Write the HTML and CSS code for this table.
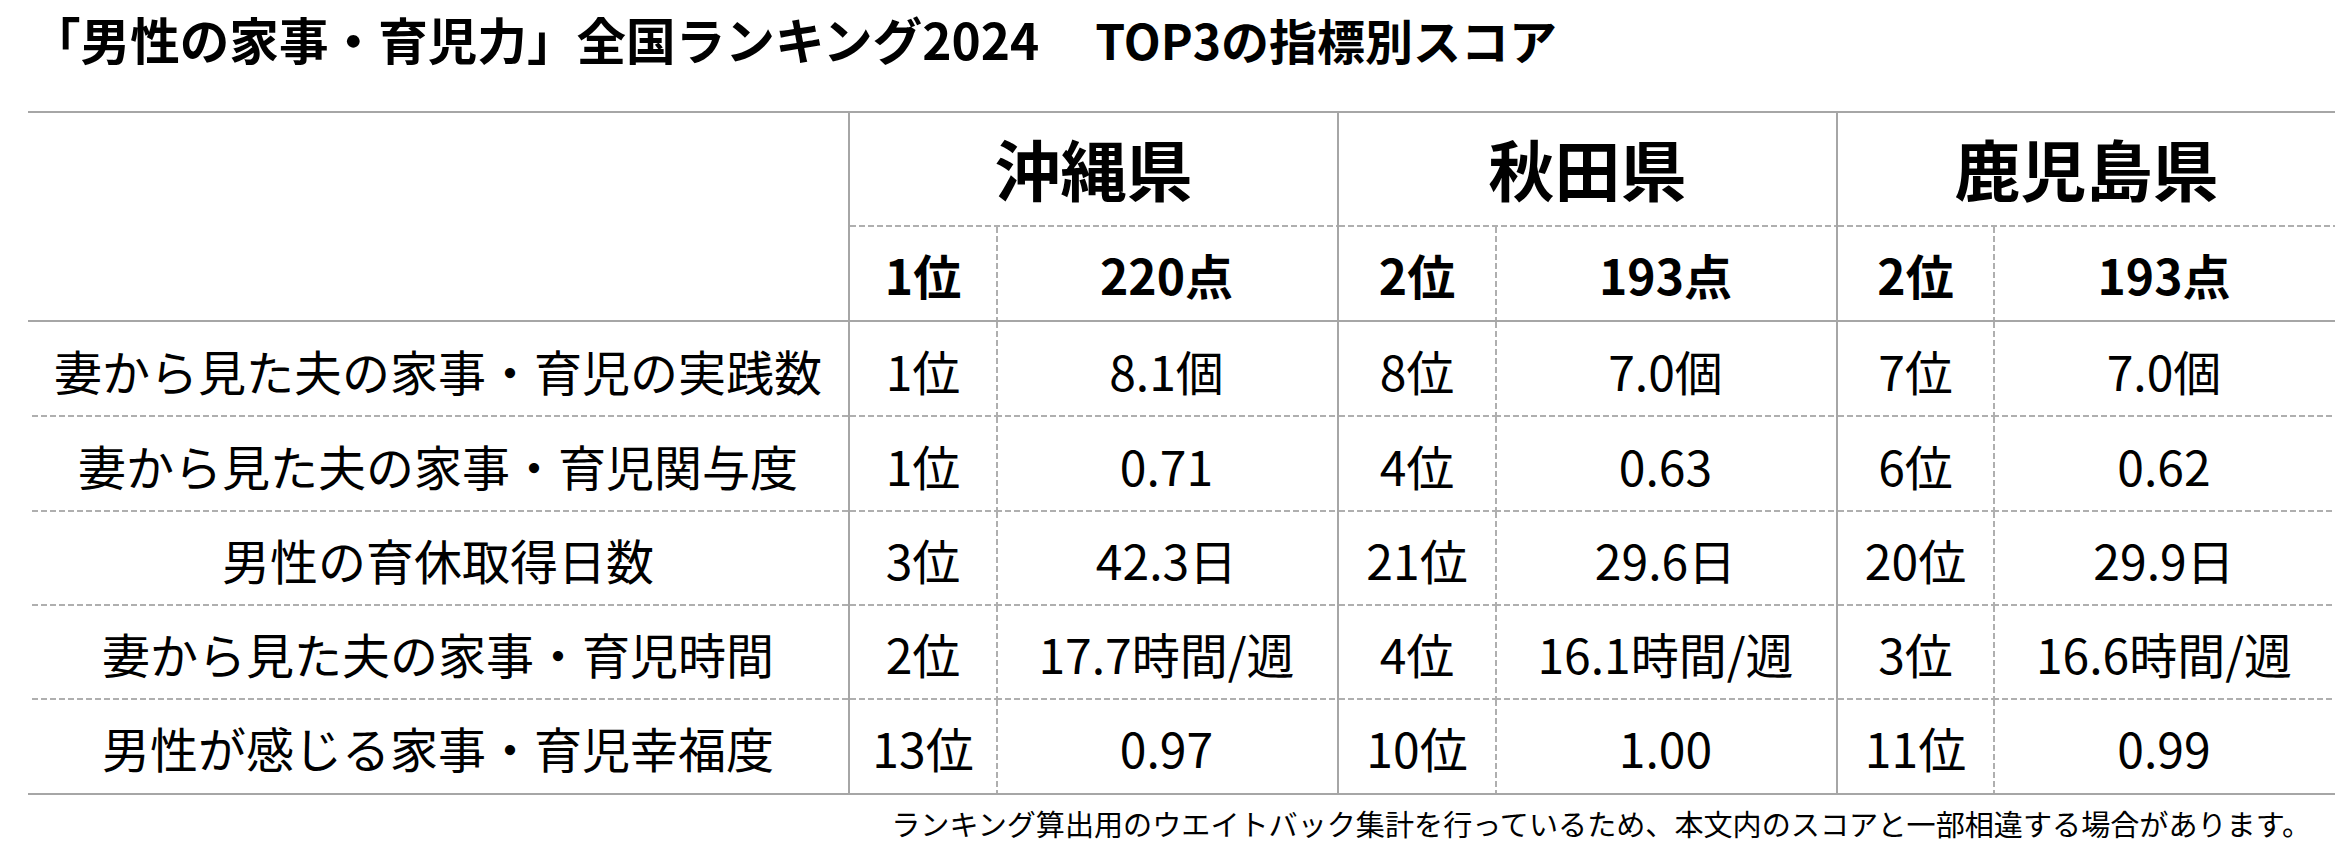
FILE: index.html
```html
<!DOCTYPE html>
<html lang="ja">
<head>
<meta charset="utf-8">
<title>「男性の家事・育児力」全国ランキング2024 TOP3の指標別スコア</title>
<link rel="stylesheet" href="styles.css">
</head>
<body>
<main class="page">
  <h1 class="title"><span class="title-main">「男性の家事・育児力」全国ランキング2024</span><span class="title-sub">TOP3の指標別スコア</span></h1>

  <div class="score-table" role="table">
    <div class="cell head-blank" role="columnheader"></div>
    <div class="cell pref" role="columnheader">沖縄県</div>
    <div class="cell pref" role="columnheader">秋田県</div>
    <div class="cell pref" role="columnheader">鹿児島県</div>

    <div class="cell rank total">1位</div>
    <div class="cell score total">220点</div>
    <div class="cell rank total">2位</div>
    <div class="cell score total">193点</div>
    <div class="cell rank total">2位</div>
    <div class="cell score total">193点</div>

    <div class="cell label">妻から見た夫の家事・育児の実践数</div>
    <div class="cell rank">1位</div>
    <div class="cell score">8.1個</div>
    <div class="cell rank">8位</div>
    <div class="cell score">7.0個</div>
    <div class="cell rank">7位</div>
    <div class="cell score">7.0個</div>

    <div class="cell label">妻から見た夫の家事・育児関与度</div>
    <div class="cell rank">1位</div>
    <div class="cell score">0.71</div>
    <div class="cell rank">4位</div>
    <div class="cell score">0.63</div>
    <div class="cell rank">6位</div>
    <div class="cell score">0.62</div>

    <div class="cell label">男性の育休取得日数</div>
    <div class="cell rank">3位</div>
    <div class="cell score">42.3日</div>
    <div class="cell rank">21位</div>
    <div class="cell score">29.6日</div>
    <div class="cell rank">20位</div>
    <div class="cell score">29.9日</div>

    <div class="cell label">妻から見た夫の家事・育児時間</div>
    <div class="cell rank">2位</div>
    <div class="cell score">17.7時間/週</div>
    <div class="cell rank">4位</div>
    <div class="cell score">16.1時間/週</div>
    <div class="cell rank">3位</div>
    <div class="cell score">16.6時間/週</div>

    <div class="cell label last">男性が感じる家事・育児幸福度</div>
    <div class="cell rank last">13位</div>
    <div class="cell score last">0.97</div>
    <div class="cell rank last">10位</div>
    <div class="cell score last">1.00</div>
    <div class="cell rank last">11位</div>
    <div class="cell score last">0.99</div>
  </div>

  <p class="note">ランキング算出用のウエイトバック集計を行っているため、本文内のスコアと一部相違する場合があります。</p>
</main>
</body>
</html>
```

FILE: styles.css
```css
:root {
  --solid: #a6a6a6;
  --dash: #afafaf;
  --dash-h: repeating-linear-gradient(to right, var(--dash) 0 6px, transparent 6px 9px);
  --dash-v: repeating-linear-gradient(to bottom, var(--dash) 0 6px, transparent 6px 9px);
}

* {
  box-sizing: border-box;
}

html, body {
  margin: 0;
  padding: 0;
  background: #ffffff;
}

body {
  font-family: "Noto Sans CJK JP", "Noto Sans", sans-serif;
  color: #000000;
}

.page {
  width: 2345px;
  padding: 0 10px 0 28px;
}

.title {
  margin: 0 0 33px 0;
  height: 78px;
  display: flex;
  align-items: center;
  padding-left: 3px;
  font-size: 49.6px;
  font-weight: 700;
  line-height: 1;
  letter-spacing: 0;
}

.title-sub {
  margin-left: 56px;
  font-size: 48px;
}

.score-table {
  display: grid;
  grid-template-columns: 820px 148px 341px 158px 341px 157px 342px;
  grid-template-rows: 114px 95px 95px 95px 94px 94px 95px;
  width: 2307px;
  margin-top: 2px;
  border-top: 2px solid var(--solid);
}

.cell {
  display: flex;
  align-items: center;
  justify-content: center;
  font-size: 48px;
  line-height: 1;
  white-space: nowrap;
}

.head-blank {
  grid-row: span 2;
  border-bottom: 2px solid var(--solid);
}

.pref {
  grid-column: span 2;
  font-size: 66px;
  font-weight: 700;
  border-left: 2px solid var(--solid);
  background: var(--dash-h) left bottom / 100% 2px no-repeat;
  padding-bottom: 6px;
}

.total {
  font-weight: 700;
  border-bottom: 2px solid var(--solid);
}

.rank {
  border-left: 2px solid var(--solid);
}

.label {
  background: var(--dash-h) 4px bottom / 100% 2px no-repeat;
}

.rank:not(.total) {
  background: var(--dash-h) left bottom / 100% 2px no-repeat;
}

.score {
  background: var(--dash-v) left top / 2px 100% no-repeat;
}

.score:not(.total) {
  background:
    var(--dash-v) left top / 2px 100% no-repeat,
    var(--dash-h) left bottom / 100% 2px no-repeat;
}

.cell.last {
  border-bottom: 2px solid var(--solid);
  background-image: none;
}

.score.last {
  background: var(--dash-v) left top / 2px 100% no-repeat;
}

.note {
  margin: 8px 0 0 0;
  width: 2307px;
  padding-right: 24px;
  text-align: right;
  font-size: 29.1px;
  line-height: 40px;
}
```
